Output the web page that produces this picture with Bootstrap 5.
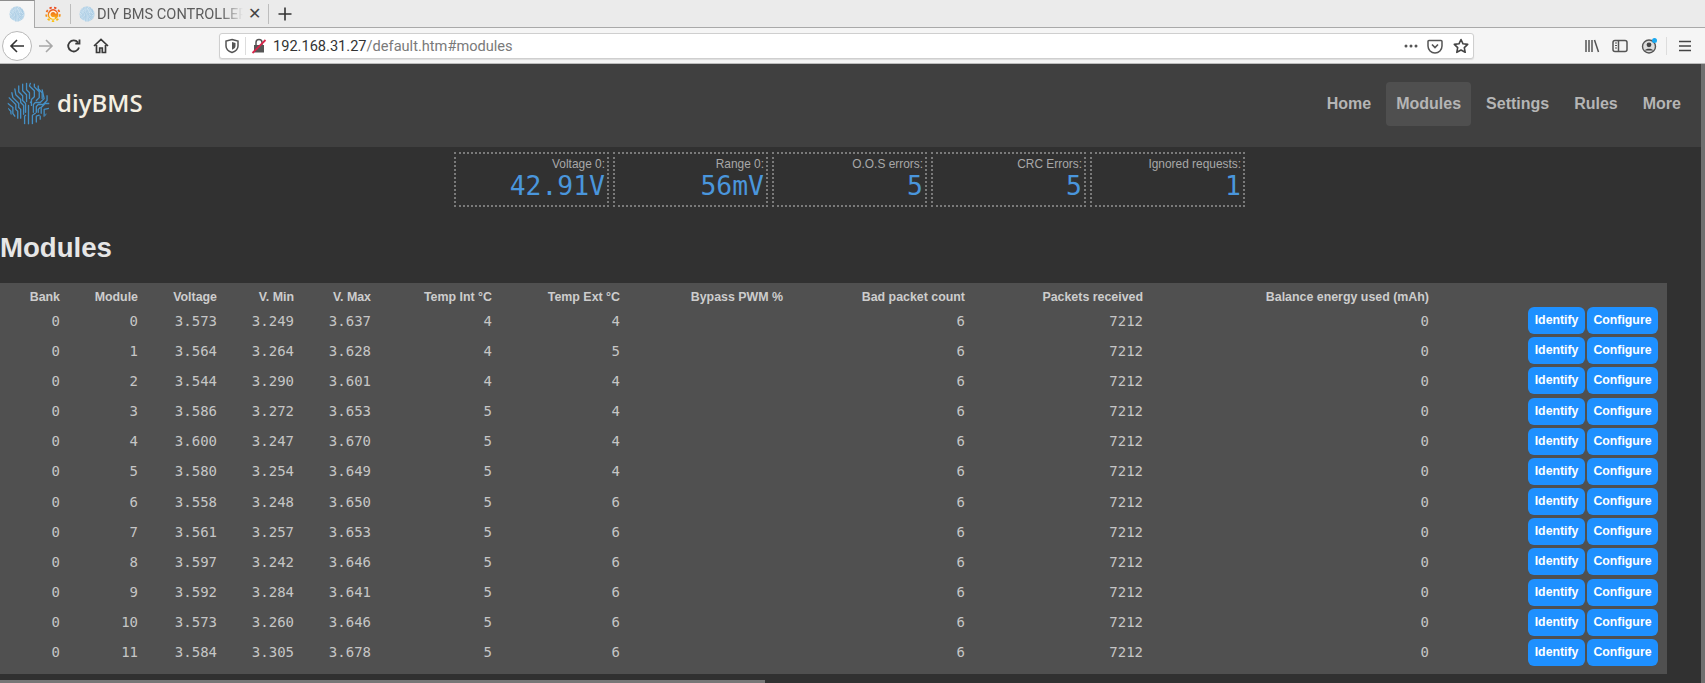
<!DOCTYPE html>
<html lang="en">
<head>
    <meta charset="UTF-8">
    <meta name="viewport" content="width=device-width, initial-scale=1.0">
    <title>DIY BMS CONTROLLER</title>
    <link href="https://cdn.jsdelivr.net/npm/bootstrap@5.3.0/dist/css/bootstrap.min.css" rel="stylesheet">
    <style>
        html, body { height: 683px; overflow: hidden; }
        body { background: #313131; font-family: "Liberation Sans", Arial, sans-serif; }

        /* browser chrome */
        .tab-strip { height: 28px; background: #ebebeb; border-bottom: 1px solid #a9a9a9; }
        .tab-active { width: 35px; height: 28px; background: #f5f5f5; border-top: 1px solid #8e8e8e; border-right: 1px solid #a9a9a9; }
        .tab-other { width: 35px; }
        .tab-sep { width: 1px; height: 20px; background: #bdbdbd; }
        .tab-main { width: 197px; }
        .tab-title { width: 146px; margin-left: 2px; font: 14.6px "Roboto", sans-serif; color: #5c5c5c; white-space: nowrap; overflow: hidden; -webkit-mask-image: linear-gradient(to right, #000 85%, transparent); mask-image: linear-gradient(to right, #000 85%, transparent); }
        .tab-close { font: 16px "Liberation Sans", sans-serif; color: #444; margin-left: 5px; }
        .tool-strip { height: 36px; background: #f5f5f5; border-bottom: 1px solid #bcbcbc; }
        .back-btn { width: 30px; height: 30px; margin-left: 2px; background: #fff; border: 1px solid #b9b9b9; border-radius: 50%; flex: none; }
        .tool-ico { width: 16px; height: 16px; flex: none; }
        .ico-fwd { margin-left: 6px; }
        .ico-reload { margin-left: 12px; }
        .ico-home { margin-left: 11px; }
        .url-bar { width: 1255px; height: 26px; margin-left: 110px; background: #fff; border: 1px solid #cfcfcf; border-radius: 3px; padding: 0 4px 0 4px; box-shadow: 0 1px 1px #ddd; flex: none; }
        .url-sep { width: 1px; height: 18px; background: #ddd; margin: 0 5px; flex: none; }
        .url-text { font: 14.6px "Roboto", sans-serif; color: #7a7a7a; margin-left: 6px; white-space: nowrap; }
        .url-text b { font-weight: 400; color: #333; }
        .ico-pocket { margin-left: 8px; }
        .ico-star { margin-left: 10px; }
        .ico-library { margin-left: 110px; }
        .ico-sidebar { margin-left: 12px; }
        .ico-account { margin-left: 13px; }
        .sep-right { margin: 0 10px 0 9px; }

        /* page */
        .page-wrap { width: 1701px; }
        .scroll-v { position: absolute; top: 64px; right: 0; width: 4px; height: 619px; background: #6f6f6f; }
        .scroll-h { position: absolute; left: 0; bottom: 0; width: 765px; height: 3px; background: #777; }
        .top-bar { height: 83px; background: #404040; padding: 18px 10px 0 7px; }
        .logo-svg { width: 43px; height: 43px; flex: none; }
        .brand-name { font: 600 24px "Open Sans", sans-serif; color: #f4efe2; margin: -3px 0 0 7px; line-height: 43px; }
        .menu-link { display: block; height: 44px; line-height: 43px; padding: 0 10px; margin-left: 5px; font-size: 16px; font-weight: 700; color: #b5b5b5; text-decoration: none; border-radius: 4px; }
        .menu-link.current { background: #4f4f4f; }

        .stat-row { margin: 5px 0 0 454px; gap: 4px; }
        .stat-tile { width: 155px; height: 55px; border: 2px dotted #7a7a7a; text-align: right; padding-right: 2px; }
        .stat-label { font-size: 11.9px; line-height: 13px; margin-top: 4px; color: #a8a8a8; }
        .stat-value { font: 26.4px/30px "DejaVu Sans Mono", monospace; color: #4a96dc; }
        .page-title { font-size: 27.6px; font-weight: 700; line-height: 32px; color: #e6e6e6; margin: 25px 0 19px; }

        .module-panel { width: 1667px; height: 391px; background: #505050; padding-top: 5.5px; }
        .module-table { table-layout: fixed; width: 1667px; margin: 0; --bs-table-bg: transparent; --bs-table-color: #c6c6c6; }
        .module-table th, .module-table td { padding: 0 4px; text-align: right; vertical-align: middle; white-space: nowrap; overflow: visible; }
        .module-table th { height: 17px; font-size: 12.4px; line-height: 17px; font-weight: 700; color: #cdcdcd; }
        .module-table td { height: 30.18px; font: 14px "DejaVu Sans Mono", monospace; }
        .module-table td:last-child { padding: 0 9px 0 0; font-size: 0; }
        .module-table th:nth-child(1) { width: 64px; }
        .module-table th:nth-child(2) { width: 78px; }
        .module-table th:nth-child(3) { width: 79px; }
        .module-table th:nth-child(4) { width: 77px; }
        .module-table th:nth-child(5) { width: 77px; }
        .module-table th:nth-child(6) { width: 121px; }
        .module-table th:nth-child(7) { width: 128px; }
        .module-table th:nth-child(8) { width: 163px; }
        .module-table th:nth-child(9) { width: 182px; }
        .module-table th:nth-child(10) { width: 178px; }
        .module-table th:nth-child(11) { width: 286px; }
        .act-btn { height: 27px; padding: 0 6.5px; margin-left: 2px; font: 700 12.3px/27px "Liberation Sans", sans-serif; color: #fff; background: #1e90ff; border: 0; border-radius: 6px; vertical-align: middle; }
    </style>
</head>
<body>
    <svg width="0" height="0" class="position-absolute">
        <defs><clipPath id="logoClip"><circle cx="22" cy="22" r="21.500"/></clipPath></defs>
        <symbol id="brainLogo" viewBox="0 0 44 44">
            <g clip-path="url(#logoClip)" fill="none" stroke-width="1.350" stroke-linecap="round" stroke-linejoin="round">
                <path d="M16 2v7l4 4v7M20 1v7l3 3v6M24 1l-1 3 5 5v6l-3 3v6M28 2v3l5 5v6l-3 3M32 4v3l4 4v6"/>
                <path d="M36 8l2 9-4 4h-5l-2 2v8M41 14v5l-4 4h-5l-2 2v6M43 22h-4l-4 4v6M43 27l-5 1v7M40 33l-1 5"/>
                <path d="M12 4v6l4 4v5l3 3v9M8 7l1 6 5 5v3l3 3v9M5 11l1 5 6 6v4l2 2v9M2 16l7 7v5l2 2v7M1 22l5 4v6l2 3M1 27l3 3v3"/>
                <path d="M22 43V24M26 43v-9l3-2M30 41v-6l3-1M34 38v-3M18 43v-8l1-1M32 31v-3l2-2M24 21l1-1"/>
            </g>
        </symbol>
    </svg>

    <!-- tabs -->
    <div class="tab-strip d-flex align-items-center">
        <div class="tab-active d-flex align-items-center justify-content-center">
            <svg class="tool-ico"><circle cx="8" cy="8" r="7.500" fill="#d3e6f3"/><use href="#brainLogo" width="16" height="16" stroke="#8fbcdb"/></svg>
        </div>
        <div class="tab-other d-flex align-items-center justify-content-center">
            <svg class="tool-ico" viewBox="0 0 16 16">
                <defs><linearGradient id="grafGrad" x1="0" y1="0" x2="0" y2="1"><stop offset="0" stop-color="#ec4f26"/><stop offset="1" stop-color="#fbc30f"/></linearGradient></defs>
                <circle cx="8" cy="8.400" r="5.300" fill="url(#grafGrad)"/>
                <circle cx="8" cy="8.400" r="6.800" fill="none" stroke="url(#grafGrad)" stroke-width="1.800" stroke-dasharray="2.400 2.300"/>
                <path d="M11.200 7.500a3.300 3.300 0 1 0-1.500 4" fill="none" stroke="#fff4df" stroke-width="1.500"/>
            </svg>
        </div>
        <div class="tab-sep"></div>
        <div class="tab-main d-flex align-items-center">
            <svg class="tool-ico ms-2"><circle cx="8" cy="8" r="7.500" fill="#d3e6f3"/><use href="#brainLogo" width="16" height="16" stroke="#8fbcdb"/></svg>
            <span class="tab-title">DIY BMS CONTROLLER</span>
            <span class="tab-close">&#10005;</span>
        </div>
        <div class="tab-sep"></div>
        <svg class="tool-ico ms-2" viewBox="0 0 16 16"><path d="M8 1.500v13M1.500 8h13" stroke="#333" stroke-width="1.600"/></svg>
    </div>

    <!-- toolbar -->
    <div class="tool-strip d-flex align-items-center">
        <div class="back-btn d-flex align-items-center justify-content-center">
            <svg class="tool-ico" viewBox="0 0 16 16"><path d="M15 8H2M8 2L2 8l6 6" fill="none" stroke="#333" stroke-width="1.600"/></svg>
        </div>
        <svg class="tool-ico ico-fwd" viewBox="0 0 16 16"><path d="M1 8h13M8 2l6 6-6 6" fill="none" stroke="#a8a8a8" stroke-width="1.600"/></svg>
        <svg class="tool-ico ico-reload" viewBox="0 0 16 16"><path d="M13 9.500A5.500 5.500 0 1 1 12 4.500M13.500 1.500v4.200H9.300" fill="none" stroke="#3a3a3a" stroke-width="1.800"/></svg>
        <svg class="tool-ico ico-home" viewBox="0 0 16 16"><path d="M1 8l7-6.500L15 8M3.500 7v7.500h3.200V10h2.600v4.500h3.200V7" fill="none" stroke="#3a3a3a" stroke-width="1.700"/></svg>
        <div class="url-bar d-flex align-items-center">
            <svg class="tool-ico" viewBox="0 0 16 16"><path d="M8 1.500l6 1.500v5c0 3.500-3 5.500-6 6.500-3-1-6-3-6-6.500V3z" fill="none" stroke="#555" stroke-width="1.500"/><path d="M8 4l3.500 1v3c0 2-1.500 3-3.500 3.700z" fill="#555"/></svg>
            <div class="url-sep"></div>
            <svg class="tool-ico" viewBox="0 0 16 16"><rect x="3" y="7" width="10" height="7.500" fill="#555"/><path d="M5 7V4.500a3 3 0 0 1 6 0V7" fill="none" stroke="#555" stroke-width="1.500"/><path d="M1.500 15L14.500 2" stroke="#d7264b" stroke-width="1.800"/></svg>
            <span class="url-text"><b>192.168.31.27</b>/default.htm#modules</span>
            <svg class="tool-ico ms-auto" viewBox="0 0 16 16" fill="#555"><circle cx="3" cy="8" r="1.500"/><circle cx="8" cy="8" r="1.500"/><circle cx="13" cy="8" r="1.500"/></svg>
            <svg class="tool-ico ico-pocket" viewBox="0 0 16 16"><path d="M2 2.500h12a1 1 0 0 1 1 1V8a7 7 0 0 1-14 0V3.500a1 1 0 0 1 1-1z" fill="none" stroke="#555" stroke-width="1.500"/><path d="M5 6.500l3 3 3-3" fill="none" stroke="#555" stroke-width="1.700"/></svg>
            <svg class="tool-ico ico-star" viewBox="0 0 16 16"><path d="M8 1.500l2 4.300 4.700.6-3.400 3.200.9 4.700L8 12l-4.200 2.300.9-4.700L1.300 6.400 6 5.800z" fill="none" stroke="#444" stroke-width="1.600" stroke-linejoin="round"/></svg>
        </div>
        <svg class="tool-ico ico-library" viewBox="0 0 16 16"><path d="M2 2v12M5 2v12M8 2v12M10.500 2l4 12" stroke="#555" stroke-width="1.500"/></svg>
        <svg class="tool-ico ico-sidebar" viewBox="0 0 16 16"><rect x="1" y="2.500" width="14" height="11" rx="2" fill="none" stroke="#555" stroke-width="1.500"/><path d="M6.500 2.500v11" stroke="#555" stroke-width="1.500"/><path d="M3 5h2M3 7.500h2M3 10h2" stroke="#555"/></svg>
        <svg class="tool-ico ico-account" viewBox="0 0 16 16"><circle cx="8" cy="8.500" r="6.500" fill="#ddd" stroke="#555" stroke-width="1.400"/><circle cx="8" cy="6.800" r="2.400" fill="#444"/><path d="M3.800 12.500c1-2.500 7.400-2.500 8.400 0" fill="#444"/><circle cx="13.500" cy="2.500" r="2.500" fill="#19a8f0"/></svg>
        <div class="url-sep sep-right"></div>
        <svg class="tool-ico" viewBox="0 0 16 16"><path d="M2 3.500h12M2 8h12M2 12.500h12" stroke="#444" stroke-width="1.700"/></svg>
    </div>

    <div class="scroll-v"></div>
    <div class="scroll-h"></div>

    <div class="page-wrap">
        <nav class="top-bar d-flex justify-content-between align-items-start">
            <div class="d-flex align-items-center">
                <svg class="logo-svg" stroke="#4490c6"><use href="#brainLogo" width="43" height="43"/></svg>
                <span class="brand-name">diyBMS</span>
            </div>
            <div class="d-flex">
                <a class="menu-link" href="#home">Home</a>
                <a class="menu-link current" href="#modules">Modules</a>
                <a class="menu-link" href="#settings">Settings</a>
                <a class="menu-link" href="#rules">Rules</a>
                <a class="menu-link" href="#more">More</a>
            </div>
        </nav>

        <div id="statRow" class="stat-row d-flex"></div>

        <h1 class="page-title">Modules</h1>

        <div class="module-panel">
            <table class="table table-borderless module-table">
                <thead>
                    <tr>
                        <th>Bank</th><th>Module</th><th>Voltage</th><th>V. Min</th><th>V. Max</th>
                        <th>Temp Int °C</th><th>Temp Ext °C</th><th>Bypass PWM %</th>
                        <th>Bad packet count</th><th>Packets received</th><th>Balance energy used (mAh)</th><th></th>
                    </tr>
                </thead>
                <tbody id="moduleRows"></tbody>
            </table>
        </div>
    </div>

    <script src="https://cdn.jsdelivr.net/npm/bootstrap@5.3.0/dist/js/bootstrap.bundle.min.js"></script>
    <script>
        const stats = [
            ['Voltage 0:', '42.91V'], ['Range 0:', '56mV'], ['O.O.S errors:', '5'],
            ['CRC Errors:', '5'], ['Ignored requests:', '1']
        ];
        document.getElementById('statRow').innerHTML = stats.map(s =>
            `<div class="stat-tile"><div class="stat-label">${s[0]}</div><div class="stat-value">${s[1]}</div></div>`
        ).join('');

        const modules = [
            ['3.573', '3.249', '3.637', 4, 4], ['3.564', '3.264', '3.628', 4, 5],
            ['3.544', '3.290', '3.601', 4, 4], ['3.586', '3.272', '3.653', 5, 4],
            ['3.600', '3.247', '3.670', 5, 4], ['3.580', '3.254', '3.649', 5, 4],
            ['3.558', '3.248', '3.650', 5, 6], ['3.561', '3.257', '3.653', 5, 6],
            ['3.597', '3.242', '3.646', 5, 6], ['3.592', '3.284', '3.641', 5, 6],
            ['3.573', '3.260', '3.646', 5, 6], ['3.584', '3.305', '3.678', 5, 6]
        ];
        document.getElementById('moduleRows').innerHTML = modules.map((m, i) => `
            <tr>
                <td>0</td><td>${i}</td><td>${m[0]}</td><td>${m[1]}</td><td>${m[2]}</td>
                <td>${m[3]}</td><td>${m[4]}</td><td></td><td>6</td><td>7212</td><td>0</td>
                <td><button class="btn act-btn">Identify</button><button class="btn act-btn">Configure</button></td>
            </tr>`).join('');
    </script>
</body>
</html>
